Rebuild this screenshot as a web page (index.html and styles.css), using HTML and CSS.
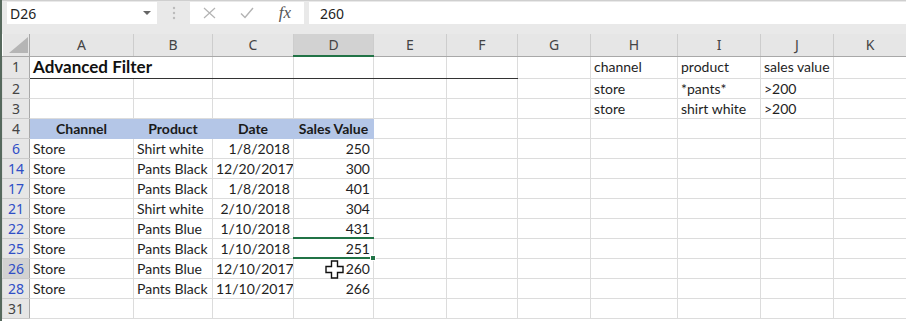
FILE: index.html
```html
<!DOCTYPE html>
<html lang="en">
<head>
    <meta charset="UTF-8">
    <meta name="viewport" content="width=device-width, initial-scale=1.0">
    <title>Advanced Filter</title>
    <link rel="stylesheet" href="styles.css">
</head>
<body>
    <div class="formula-bar">
        <div class="name-box">
            <span>D26</span>
            <svg class="caret" width="8" height="5" viewBox="0 0 8 5"><path d="M0 0 L8 0 L4 4 Z" fill="#666"/></svg>
        </div>
        <div class="grip">
            <svg width="4" height="14" viewBox="0 0 4 14"><circle cx="2" cy="2" r="1.2" fill="#bbb"/><circle cx="2" cy="7" r="1.2" fill="#bbb"/><circle cx="2" cy="12" r="1.2" fill="#bbb"/></svg>
        </div>
        <div class="fx-buttons">
            <span class="btn">
                <svg width="13" height="12" viewBox="0 0 13 12"><path d="M1 1 L12 11 M12 1 L1 11" stroke="#b3b3b3" stroke-width="1.2" fill="none"/></svg>
            </span>
            <span class="btn">
                <svg width="14" height="12" viewBox="0 0 14 12"><path d="M1 6.5 L5 10.5 L13 1" stroke="#b3b3b3" stroke-width="1.4" fill="none"/></svg>
            </span>
            <span class="btn fx">fx</span>
        </div>
        <div class="formula-input">260</div>
    </div>

    <table class="sheet">
        <colgroup>
            <col class="w-rh">
            <col class="w-a"><col class="w-b"><col class="w-c"><col class="w-d">
            <col class="w-e"><col class="w-f"><col class="w-g"><col class="w-h">
            <col class="w-i"><col class="w-j"><col class="w-k">
        </colgroup>
        <tr class="col-heads">
            <th class="corner">
                <svg width="19" height="16" viewBox="0 0 19 16"><path d="M19 0 L19 16 L0 16 Z" fill="#b5b5b5"/></svg>
            </th>
            <th>A</th><th>B</th><th>C</th><th class="col-sel">D</th><th>E</th>
            <th>F</th><th>G</th><th>H</th><th>I</th><th>J</th><th>K</th>
        </tr>
        <tr class="row-title">
            <td class="rh">1</td>
            <td class="title" colspan="2">Advanced Filter</td>
            <td class="line"></td><td class="line"></td><td class="line"></td><td class="line"></td>
            <td></td><td>channel</td><td>product</td><td>sales value</td><td></td>
        </tr>
        <tr>
            <td class="rh">2</td>
            <td></td><td></td><td></td><td></td><td></td><td></td><td></td>
            <td>store</td><td>*pants*</td><td>&gt;200</td><td></td>
        </tr>
        <tr>
            <td class="rh">3</td>
            <td></td><td></td><td></td><td></td><td></td><td></td><td></td>
            <td>store</td><td>shirt white</td><td>&gt;200</td><td></td>
        </tr>
        <tr>
            <td class="rh">4</td>
            <td class="hd">Channel</td><td class="hd">Product</td><td class="hd">Date</td><td class="hd">Sales Value</td>
            <td></td><td></td><td></td><td></td><td></td><td></td><td></td>
        </tr>
        <tr>
            <td class="rh hit">6</td>
            <td>Store</td><td>Shirt white</td><td class="num">1/8/2018</td><td class="num">250</td>
            <td></td><td></td><td></td><td></td><td></td><td></td><td></td>
        </tr>
        <tr>
            <td class="rh hit">14</td>
            <td>Store</td><td>Pants Black</td><td class="num">12/20/2017</td><td class="num">300</td>
            <td></td><td></td><td></td><td></td><td></td><td></td><td></td>
        </tr>
        <tr>
            <td class="rh hit">17</td>
            <td>Store</td><td>Pants Black</td><td class="num">1/8/2018</td><td class="num">401</td>
            <td></td><td></td><td></td><td></td><td></td><td></td><td></td>
        </tr>
        <tr>
            <td class="rh hit">21</td>
            <td>Store</td><td>Shirt white</td><td class="num">2/10/2018</td><td class="num">304</td>
            <td></td><td></td><td></td><td></td><td></td><td></td><td></td>
        </tr>
        <tr>
            <td class="rh hit">22</td>
            <td>Store</td><td>Pants Blue</td><td class="num">1/10/2018</td><td class="num">431</td>
            <td></td><td></td><td></td><td></td><td></td><td></td><td></td>
        </tr>
        <tr>
            <td class="rh hit">25</td>
            <td>Store</td><td>Pants Black</td><td class="num">1/10/2018</td><td class="num sel">251</td>
            <td></td><td></td><td></td><td></td><td></td><td></td><td></td>
        </tr>
        <tr>
            <td class="rh hit row-sel">26</td>
            <td>Store</td><td>Pants Blue</td><td class="num">12/10/2017</td>
            <td class="num cur">260
                <svg class="cursor" width="19" height="19" viewBox="0 0 19 19"><path d="M6.5 1 L12.5 1 L12.5 6.5 L18 6.5 L18 12.5 L12.5 12.5 L12.5 18 L6.5 18 L6.5 12.5 L1 12.5 L1 6.5 L6.5 6.5 Z" fill="#fff" stroke="#111" stroke-width="1.4"/></svg>
            </td>
            <td></td><td></td><td></td><td></td><td></td><td></td><td></td>
        </tr>
        <tr>
            <td class="rh hit">28</td>
            <td>Store</td><td>Pants Black</td><td class="num">11/10/2017</td><td class="num">266</td>
            <td></td><td></td><td></td><td></td><td></td><td></td><td></td>
        </tr>
        <tr>
            <td class="rh">31</td>
            <td></td><td></td><td></td><td></td><td></td><td></td><td></td><td></td><td></td><td></td><td></td>
        </tr>
    </table>
</body>
</html>
```

FILE: styles.css
```css
body {
    margin: 0;
    height: 321px;
    overflow: hidden;
    background-color: #fff;
    border-left: 2px solid #56695d;
    font-family: "Lato", "Liberation Sans", sans-serif;
}

/* formula bar */
.formula-bar {
    display: flex;
    height: 22px;
    padding: 1px 0 10px 5px;
    background-color: #e9e9e9;
    border-top: 1px solid #cfcfcf;
}

.name-box {
    width: 150px;
    background-color: #fff;
    display: flex;
    align-items: center;
    justify-content: space-between;
    padding: 0 6px 0 3px;
    box-sizing: border-box;
    font-family: "Noto Sans", sans-serif;
    font-size: 14px;
    color: #222;
}

.grip {
    width: 33px;
    display: flex;
    align-items: center;
    justify-content: center;
}

.fx-buttons {
    width: 114px;
    background-color: #fff;
    display: flex;
    margin-right: 5px;
}

.fx-buttons .btn {
    width: 38px;
    display: flex;
    align-items: center;
    justify-content: center;
}

.fx-buttons .fx {
    font-family: "Liberation Serif", serif;
    font-style: italic;
    font-size: 17px;
    color: #555;
}

.formula-input {
    flex-grow: 1;
    background-color: #fff;
    padding-left: 11px;
    display: flex;
    align-items: center;
    font-family: "Noto Sans", sans-serif;
    font-size: 14px;
    color: #222;
}

/* grid */
.sheet {
    border-collapse: collapse;
    table-layout: fixed;
    width: 904px;
}

.w-rh { width: 27px; }
.w-a { width: 104px; }
.w-b { width: 79px; }
.w-c { width: 81px; }
.w-d { width: 80px; }
.w-e { width: 73px; }
.w-f { width: 71px; }
.w-g { width: 73px; }
.w-h { width: 87px; }
.w-i { width: 83px; }
.w-j { width: 73px; }
.w-k { width: 73px; }

.sheet th {
    height: 21px;
    padding: 0;
    background-color: #e6e6e6;
    border-right: 1px solid #cdcdcd;
    border-bottom: 1px solid #a8a8a8;
    font-family: "Noto Sans", sans-serif;
    font-size: 14px;
    font-weight: normal;
    color: #444;
}

.sheet th.corner {
    text-align: right;
    vertical-align: bottom;
    border-right-color: #a8a8a8;
    line-height: 0;
}

.sheet th.corner svg {
    margin: 0 1px 3px 0;
}

.sheet th.col-sel {
    background-color: #d2d2d2;
    border-bottom: 2px solid #217346;
}

.sheet td {
    height: 19px;
    padding: 0 3px;
    border: 1px solid #dcdcdc;
    font-size: 14px;
    line-height: 18px;
    color: #1e1e1e;
    white-space: nowrap;
    overflow: hidden;
}

.sheet td.rh {
    padding: 0;
    text-align: center;
    background-color: #e6e6e6;
    border-right-color: #a8a8a8;
    border-bottom-color: #cacaca;
    font-family: "Noto Sans", sans-serif;
    font-size: 14px;
    color: #444;
}

.sheet td.rh.hit {
    color: #2f4ec6;
}

.sheet td.rh.row-sel {
    background-color: #d2d2d2;
}

.row-title td {
    height: 21px;
}

.sheet td.title {
    font-size: 17px;
    font-weight: bold;
    color: #111;
    border-bottom-color: #333;
}

.sheet td.line {
    border-bottom-color: #333;
}

.sheet td.hd {
    background-color: #b4c6e7;
    border-color: #b4c6e7;
    border-top-color: #dcdcdc;
    text-align: center;
    font-weight: bold;
    color: #1a1a1a;
}

.sheet td.num {
    text-align: right;
}

.sheet td.sel {
    position: relative;
    overflow: visible;
}

.sheet td.sel::before {
    content: '';
    position: absolute;
    left: -1px;
    right: -1px;
    top: -2px;
    bottom: -1px;
    border-top: 2px solid #217346;
    border-bottom: 2px solid #217346;
}

.sheet td.sel::after {
    content: '';
    position: absolute;
    right: -3px;
    bottom: -3px;
    width: 4px;
    height: 4px;
    background-color: #217346;
    border: 1px solid #fff;
}

.sheet td.cur {
    position: relative;
    overflow: visible;
}

.cursor {
    position: absolute;
    left: 31px;
    top: 1px;
}
```
